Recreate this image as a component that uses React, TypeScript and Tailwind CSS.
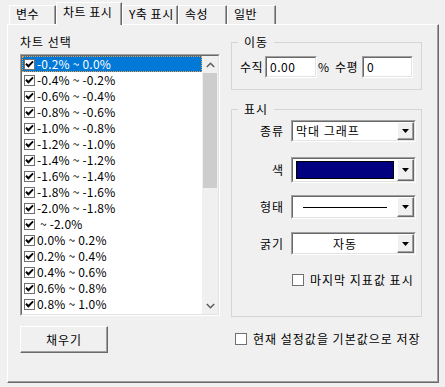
import React from 'react';

const font = "font-['Noto_Sans_CJK_KR',sans-serif]";

const ranges = [
  '-0.2% ~ 0.0%',
  '-0.4% ~ -0.2%',
  '-0.6% ~ -0.4%',
  '-0.8% ~ -0.6%',
  '-1.0% ~ -0.8%',
  '-1.2% ~ -1.0%',
  '-1.4% ~ -1.2%',
  '-1.6% ~ -1.4%',
  '-1.8% ~ -1.6%',
  '-2.0% ~ -1.8%',
  ' ~ -2.0%',
  '0.0% ~ 0.2%',
  '0.2% ~ 0.4%',
  '0.4% ~ 0.6%',
  '0.6% ~ 0.8%',
  '0.8% ~ 1.0%',
];

const tabs = [
  { label: '변수', w: 'w-[47px]' },
  { label: '차트 표시', w: 'w-[66px]', active: true },
  { label: 'Y축 표시', w: 'w-[56px]' },
  { label: '속성', w: 'w-[49px]' },
  { label: '일반', w: 'w-[49px]' },
];

function CheckBox({ checked, className = '' }: { checked?: boolean; className?: string }) {
  return (
    <span className={`flex-none bg-white border border-[#707070] flex items-center justify-center ${className}`}>
      {checked && (
        <svg width="9" height="8" viewBox="0 0 9 8">
          <path d="M1 3.8 L3.4 6.2 L8 1.4" fill="none" stroke="#000" strokeWidth="2" />
        </svg>
      )}
    </span>
  );
}

function Sunken({ className = '', children }: { className?: string; children?: React.ReactNode }) {
  return (
    <div className={`border border-t-[#a0a0a0] border-l-[#a0a0a0] border-r-white border-b-white ${className}`}>
      <div className="h-full border border-t-[#696969] border-l-[#696969] border-r-[#e3e3e3] border-b-[#e3e3e3] bg-white">
        {children}
      </div>
    </div>
  );
}

function Combo({ h, children }: { h: string; children?: React.ReactNode }) {
  return (
    <Sunken className={`w-[125px] ${h}`}>
      <div className="flex h-full">
        <div className="flex-1 flex items-center min-w-0">{children}</div>
        <div className="w-[17px] h-full bg-[#f0f0f0] border border-t-white border-l-white border-r-[#696969] border-b-[#696969] shadow-[inset_-1px_-1px_0_#a0a0a0] flex items-center justify-center">
          <svg width="7" height="4" viewBox="0 0 7 4">
            <polygon points="0,0 7,0 3.5,4" fill="#000" />
          </svg>
        </div>
      </div>
    </Sunken>
  );
}

function Chevron({ down }: { down?: boolean }) {
  return (
    <svg width="9" height="6" viewBox="0 0 9 6">
      <polyline
        points={down ? '0.8,1 4.5,4.7 8.2,1' : '0.8,5 4.5,1.3 8.2,5'}
        fill="none"
        stroke="#606060"
        strokeWidth="1.6"
      />
    </svg>
  );
}

function Field({ label, mt, children }: { label: string; mt: string; children: React.ReactNode }) {
  return (
    <div className={`${mt} flex items-center`}>
      <div className="w-[52px] flex justify-end">
        <span>{label}</span>
      </div>
      <div className="ml-[7px]">{children}</div>
    </div>
  );
}

export default function App() {
  return (
    <div className={`w-[445px] h-[387px] bg-[#f0f0f0] text-[12px] leading-[16px] tracking-[1px] text-black ${font}`}>
      {/* Tabs */}
      <div className="flex items-end h-[24px] pl-[9px] tracking-[0.5px]">
        {tabs.map(t =>
          t.active ? (
            <div
              key={t.label}
              className={`${t.w} h-[23px] -mb-px relative z-10 bg-[#f0f0f0] border-t border-l border-r border-t-white border-l-white border-r-[#696969] shadow-[inset_-1px_0_0_#a0a0a0] pl-[6px] pt-[1px] whitespace-nowrap`}
            >
              {t.label}
            </div>
          ) : (
            <div
              key={t.label}
              className={`${t.w} h-[19px] border-t border-l border-r border-t-white border-l-white border-r-[#696969] shadow-[inset_-1px_0_0_#a0a0a0] pl-[6px] whitespace-nowrap`}
            >
              {t.label}
            </div>
          )
        )}
      </div>

      {/* Panel */}
      <div className="ml-[7px] w-[432px] h-[359px] border border-t-white border-l-white border-r-[#696969] border-b-[#696969] shadow-[inset_-1px_-1px_0_#a0a0a0] pt-[9px] pl-[12px] flex gap-[11px]">
        {/* Left column */}
        <div className="w-[200px] flex flex-col">
          <div className="h-[16px]">차트 선택</div>
          <Sunken className="mt-[4px] w-[200px] h-[262px]">
            <div className="flex h-full">
              <div className="w-[180px] tracking-[0.2px]">
                {ranges.map((r, i) => (
                  <div
                    key={r}
                    className={`h-[16px] flex items-center pl-[2px] ${
                      i === 0 ? 'bg-[#0078d7] text-white outline outline-1 outline-dotted outline-[#f29b3c] -outline-offset-1' : ''
                    }`}
                  >
                    <CheckBox checked className="w-[11px] h-[11px]" />
                    <span className="ml-[2px] whitespace-pre">{r}</span>
                  </div>
                ))}
              </div>
              <div className="w-[16px] h-full flex flex-col bg-[#f0f0f0]">
                <div className="h-[17px] flex items-center justify-center">
                  <Chevron />
                </div>
                <div className="mx-px h-[115px] bg-[#cdcdcd]" />
                <div className="flex-1" />
                <div className="h-[17px] flex items-center justify-center">
                  <Chevron down />
                </div>
              </div>
            </div>
          </Sunken>
          <button className="mt-[10px] w-[88px] h-[27px] bg-[#f0f0f0] border border-t-white border-l-white border-r-[#696969] border-b-[#696969] shadow-[inset_-1px_-1px_0_#a0a0a0] flex items-center justify-center">
            채우기
          </button>
        </div>

        {/* Right column */}
        <div className="w-[191px] flex flex-col">
          <fieldset className="h-[56px] border border-[#d5d5d5]">
            <legend className="ml-[6px] px-[6px]">이동</legend>
            <div className="mt-[6px] flex items-center pl-[8px] h-[22px] tracking-[0.5px]">
              <span className="w-[25px]">수직</span>
              <Sunken className="w-[52px] h-[22px]">
                <div className="pl-[3px] leading-[18px]">0.00</div>
              </Sunken>
              <span className="w-[18px] pl-[1px]">%</span>
              <span className="w-[27px]">수평</span>
              <Sunken className="w-[51px] h-[22px]">
                <div className="pl-[3px] leading-[18px]">0</div>
              </Sunken>
            </div>
          </fieldset>

          <fieldset className="mt-[11px] h-[216px] border border-[#d5d5d5]">
            <legend className="ml-[6px] px-[6px]">표시</legend>
            <Field label="종류" mt="mt-[3px]">
              <Combo h="h-[22px]">
                <span className="pl-[3px] whitespace-nowrap">막대 그래프</span>
              </Combo>
            </Field>
            <Field label="색" mt="mt-[15px]">
              <Combo h="h-[26px]">
                <span className="ml-[3px] w-[98px] h-[18px] bg-[#000080] border border-black" />
              </Combo>
            </Field>
            <Field label="형태" mt="mt-[12px]">
              <Combo h="h-[24px]">
                <span className="ml-[10px] w-[84px] h-px bg-black" />
              </Combo>
            </Field>
            <Field label="굵기" mt="mt-[13px]">
              <Combo h="h-[23px]">
                <span className="w-full text-center">자동</span>
              </Combo>
            </Field>
            <div className="mt-[17px] h-[16px] flex items-center pl-[60px]">
              <CheckBox className="w-[12px] h-[12px]" />
              <span className="ml-[6px] whitespace-nowrap">마지막 지표값 표시</span>
            </div>
          </fieldset>

          <div className="mt-[14px] h-[16px] flex items-center pl-[4px]">
            <CheckBox className="w-[12px] h-[12px]" />
            <span className="ml-[6px] whitespace-nowrap">현재 설정값을 기본값으로 저장</span>
          </div>
        </div>
      </div>
    </div>
  );
}
